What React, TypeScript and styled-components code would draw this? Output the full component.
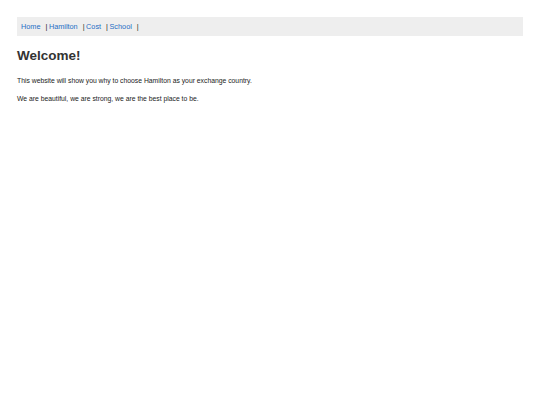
import { createGlobalStyle } from "styled-components";
import styled from "styled-components";

const GlobalStyle = createGlobalStyle`
  html, body {
    margin: 0;
    padding: 0;
    background: #ffffff;
  }
  body {
    font-family: "Liberation Sans", Arial, sans-serif;
    color: #222;
  }
`;

const links = ["Home", "Hamilton", "Cost", "School"];

const App = () => {
  return (
    <>
      <GlobalStyle />
      <Page>
        <NavBar>
          {links.map((name, i) => (
            <NavItem key={name}>
              {i > 0 && <Sep>|</Sep>}
              <NavLink href="#">{name}</NavLink>
            </NavItem>
          ))}
          <Sep>|</Sep>
        </NavBar>
        <Title>Welcome!</Title>
        <Text>This website will show you why to choose Hamilton as your exchange country.</Text>
        <Text>We are beautiful, we are strong, we are the best place to be.</Text>
      </Page>
    </>
  );
};

export default App;

const Page = styled.div`
  padding: 17px 17px;
`;

const NavBar = styled.nav`
  display: flex;
  align-items: center;
  height: 19px;
  padding: 0 4px;
  background-color: #eeeeee;
  font-size: 7.3px;
`;

const NavItem = styled.span`
  display: inline-flex;
  align-items: center;
`;

const Sep = styled.span`
  color: #222;
  margin: 0 1.5px 0 5px;
`;

const NavLink = styled.a`
  color: #1f6fc5;
  text-decoration: none;
`;

const Title = styled.h1`
  margin: 12px 0 14px;
  font-size: 13.5px;
  font-weight: bold;
  color: #333;
`;

const Text = styled.p`
  margin: 0 0 11px;
  font-size: 6.8px;
  color: #222;
`;
